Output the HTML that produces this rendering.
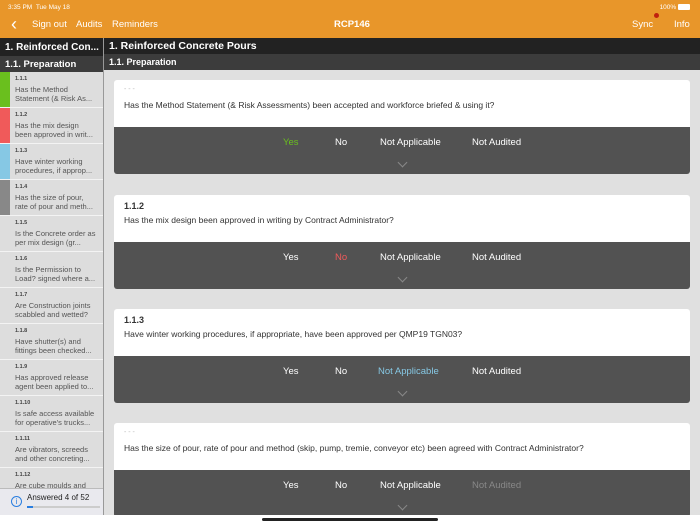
<!DOCTYPE html><html><head><style>
*{margin:0;padding:0;box-sizing:border-box}
body{width:700px;height:525px;overflow:hidden;background:#fff;font-family:"Liberation Sans",sans-serif;position:relative}
.top{position:absolute;left:0;top:0;width:700px;height:38px;background:#e8962a;color:#fff}
.top .t{position:absolute;font-size:9.5px;top:19px}
.sb{position:absolute;left:0;top:38px;width:103px;height:477px;background:#ddd;overflow:hidden}
.h1{height:18px;background:#222;color:#fff;font-weight:bold;font-size:10px;padding:4px 5px;white-space:nowrap}
.h2{height:16px;background:#3c3c3c;color:#fff;font-weight:bold;font-size:9.5px;padding:3px 5px}
.it{height:36px;border-bottom:1px solid #f3f3f3;position:relative;padding:3px 6px 0 15px;font-size:7.5px;color:#555;line-height:9px;background:#ddd;overflow:hidden}
.it b{display:block;font-size:5.5px;margin-bottom:1px;color:#444}
.it s{display:block;text-decoration:none;height:18px;overflow:hidden}
.it i{position:absolute;left:0;top:0;width:10px;height:36px}
.main{position:absolute;left:103px;top:38px;width:597px;height:477px;background:#e0e0e0;overflow:hidden;border-left:1px solid #999}
.mh1{height:16px;background:#222;color:#fff;font-weight:bold;font-size:10.5px;padding:2px 5px}
.mh2{height:16px;background:#3c3c3c;color:#fff;font-weight:bold;font-size:9px;padding:3px 5px}
.card{position:absolute;left:10px;width:576px;border-radius:3px;overflow:hidden}
.cw{background:#fff;height:47px;padding:6px 10px;font-size:8.5px;color:#333}
.cw .n{font-weight:bold;font-size:9px;color:#333;height:14px}
.cw .d{color:#bbb;font-size:7px;height:14px}
.cd{background:#525252;height:47px;position:relative;color:#fff;font-size:9.5px}
.cd span{position:absolute;top:10px}
.cd .v{position:absolute;left:285px;top:32px;width:7px;height:7px;border-right:1px solid #888;border-bottom:1px solid #888;transform:rotate(45deg)}
.foot{position:absolute;left:0;top:488px;width:103px;height:27px;background:#e9e9ee;border-top:1px solid #bbb}
</style></head><body>
<div class="top">
<div style="position:absolute;left:8px;top:4px;font-size:6.5px">3:35 PM&nbsp;&nbsp;Tue May 18</div>
<div style="position:absolute;right:10px;top:4px;font-size:6.5px">100% <span style="display:inline-block;width:12px;height:6px;background:#fff;border-radius:1px;vertical-align:middle"></span></div>
<div class="t" style="left:11px;top:14px;font-size:18px">&#x2039;</div>
<div class="t" style="left:32px">Sign out</div>
<div class="t" style="left:76px">Audits</div>
<div class="t" style="left:112px">Reminders</div>
<div class="t" style="left:334px;font-weight:bold">RCP146</div>
<div class="t" style="left:632px">Sync</div>
<div style="position:absolute;left:654px;top:13px;width:5px;height:5px;border-radius:50%;background:#c0200e"></div>
<div class="t" style="left:674px">Info</div>
</div>
<div class="sb">
<div class="h1">1. Reinforced Con...</div>
<div class="h2">1.1. Preparation</div>
<div class="it"><i style="background:#6abf1e"></i><b>1.1.1</b><s>Has the Method Statement (&amp; Risk As...</s></div>
<div class="it"><i style="background:#f05a5a"></i><b>1.1.2</b><s>Has the mix design been approved in writ...</s></div>
<div class="it"><i style="background:#86c8e4"></i><b>1.1.3</b><s>Have winter working procedures, if approp...</s></div>
<div class="it"><i style="background:#888"></i><b>1.1.4</b><s>Has the size of pour, rate of pour and meth...</s></div>
<div class="it"><b>1.1.5</b><s>Is the Concrete order as per mix design (gr...</s></div>
<div class="it"><b>1.1.6</b><s>Is the Permission to Load? signed where a...</s></div>
<div class="it"><b>1.1.7</b><s>Are Construction joints scabbled and wetted?</s></div>
<div class="it"><b>1.1.8</b><s>Have shutter(s) and fittings been checked...</s></div>
<div class="it"><b>1.1.9</b><s>Has approved release agent been applied to...</s></div>
<div class="it"><b>1.1.10</b><s>Is safe access available for operative's trucks...</s></div>
<div class="it"><b>1.1.11</b><s>Are vibrators, screeds and other concreting...</s></div>
<div class="it"><b>1.1.12</b><s>Are cube moulds and</s></div>
</div>
<div class="foot">
<div style="position:absolute;left:11px;top:7px;width:11px;height:11px;border:1px solid #2a7ee0;border-radius:50%;color:#2a7ee0;font-size:8px;text-align:center;line-height:9px">i</div>
<div style="position:absolute;left:27px;top:4px;font-size:8px;color:#222">Answered 4 of 52</div>
<div style="position:absolute;left:27px;top:17px;width:73px;height:2px;background:#ccc"><div style="width:6px;height:2px;background:#2a7ee0"></div></div>
</div>
<div class="main">
<div class="mh1">1. Reinforced Concrete Pours</div>
<div class="mh2">1.1. Preparation</div>
<div class="card" style="top:42px"><div class="cw"><div class="d">- - -</div>Has the Method Statement (&amp; Risk Assessments) been accepted and workforce briefed &amp; using it?</div>
<div class="cd"><span style="left:169px;color:#6abf1e">Yes</span><span style="left:221px">No</span><span style="left:266px">Not Applicable</span><span style="left:358px">Not Audited</span><i class="v"></i></div></div>
<div class="card" style="top:157px"><div class="cw"><div class="n">1.1.2</div>Has the mix design been approved in writing by Contract Administrator?</div>
<div class="cd"><span style="left:169px">Yes</span><span style="left:221px;color:#f05a5a">No</span><span style="left:266px">Not Applicable</span><span style="left:358px">Not Audited</span><i class="v"></i></div></div>
<div class="card" style="top:271px"><div class="cw"><div class="n">1.1.3</div>Have winter working procedures, if appropriate, have been approved per QMP19 TGN03?</div>
<div class="cd"><span style="left:169px">Yes</span><span style="left:221px">No</span><span style="left:264px;color:#86c8e4">Not Applicable</span><span style="left:358px">Not Audited</span><i class="v"></i></div></div>
<div class="card" style="top:385px"><div class="cw"><div class="d">- - -</div>Has the size of pour, rate of pour and method (skip, pump, tremie, conveyor etc) been agreed with Contract Administrator?</div>
<div class="cd"><span style="left:169px">Yes</span><span style="left:221px">No</span><span style="left:266px">Not Applicable</span><span style="left:358px;color:#888">Not Audited</span><i class="v"></i></div></div>
</div>
<div style="position:absolute;left:262px;top:518px;width:176px;height:3px;border-radius:2px;background:#222"></div>
</body></html>
